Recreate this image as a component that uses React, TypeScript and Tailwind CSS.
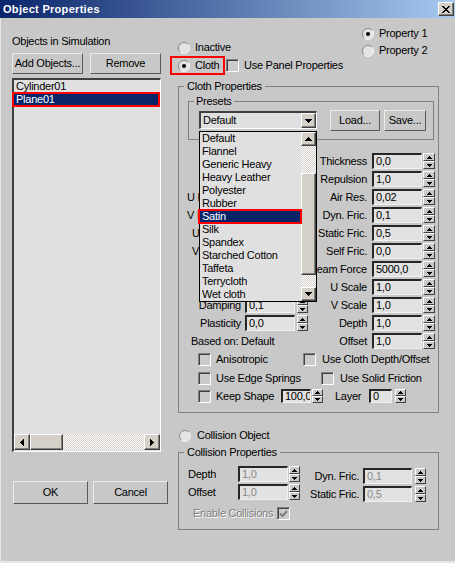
import React from 'react';

// pixel triangle, n rows
function Tri({ dir, n, color = '#000' }: { dir: 'up' | 'down' | 'left' | 'right'; n: number; color?: string }) {
  const w = 2 * n - 1;
  const rects: React.ReactNode[] = [];
  for (let i = 0; i < n; i++) {
    const len = 2 * i + 1;
    const off = n - 1 - i;
    if (dir === 'up') rects.push(<rect key={i} x={off} y={i} width={len} height={1} />);
    if (dir === 'down') rects.push(<rect key={i} x={off} y={n - 1 - i} width={len} height={1} />);
    if (dir === 'left') rects.push(<rect key={i} x={i} y={off} width={1} height={len} />);
    if (dir === 'right') rects.push(<rect key={i} x={n - 1 - i} y={off} width={1} height={len} />);
  }
  const vertical = dir === 'up' || dir === 'down';
  return (
    <svg width={vertical ? w : n} height={vertical ? n : w} fill={color} shapeRendering="crispEdges">
      {rects}
    </svg>
  );
}

function Btn({ children, className }: { children: React.ReactNode; className: string }) {
  return (
    <div
      className={`flex shrink-0 items-center justify-center whitespace-nowrap border border-t-[#ececec] border-l-[#ececec] border-r-[#5a5a5a] border-b-[#5a5a5a] bg-[#c8c8c8] ${className}`}
    >
      {children}
    </div>
  );
}

function ScrollBtn({ dir, className }: { dir: 'up' | 'down' | 'left' | 'right'; className: string }) {
  return (
    <div
      className={`flex shrink-0 items-center justify-center border border-t-white border-l-white border-r-[#404040] border-b-[#404040] bg-[#d4d0c8] shadow-[inset_-1px_-1px_0_#808080] ${className}`}
    >
      <Tri dir={dir} n={4} />
    </div>
  );
}

function Spin({ className }: { className: string }) {
  return (
    <div className={`flex shrink-0 flex-col bg-[#c8c8c8] ${className}`}>
      <div className="flex flex-1 items-center justify-center border border-t-white border-l-white border-r-[#404040] border-b-[#404040]">
        <Tri dir="up" n={3} />
      </div>
      <div className="flex flex-1 items-center justify-center border border-t-white border-l-white border-r-[#404040] border-b-[#404040]">
        <Tri dir="down" n={3} />
      </div>
    </div>
  );
}

function Field({ value, className, disabled = false }: { value: string; className: string; disabled?: boolean }) {
  return (
    <div
      className={`flex shrink-0 items-center overflow-hidden whitespace-nowrap border-t-2 border-l-2 border-r border-b border-t-[#262626] border-l-[#262626] border-r-[#f0f0f0] border-b-[#f0f0f0] bg-[#e2e2e2] pl-[2px] ${
        disabled ? 'text-[#8a8a8a]' : 'text-black'
      } ${className}`}
    >
      {value}
    </div>
  );
}

function Radio({ checked = false }: { checked?: boolean }) {
  return (
    <svg width="12" height="12" viewBox="0 0 12 12" className="shrink-0">
      <circle cx="6" cy="6" r="5.5" fill="#e4e4e4" />
      <path d="M2.1 9.9A5.5 5.5 0 0 1 9.9 2.1" fill="none" stroke="#8a8a8a" />
      <path d="M9.9 2.1A5.5 5.5 0 0 1 2.1 9.9" fill="none" stroke="#f4f4f4" />
      {checked && <circle cx="6" cy="6" r="2" fill="#000" />}
    </svg>
  );
}

function Check({ checked = false, disabled = false, className = '' }: { checked?: boolean; disabled?: boolean; className?: string }) {
  return (
    <div
      className={`flex h-[13px] w-[13px] shrink-0 items-center justify-center border border-t-[#808080] border-l-[#808080] border-r-white border-b-white bg-[#cbcbcb] shadow-[inset_1px_1px_0_#404040] ${className}`}
    >
      {checked && (
        <svg width="9" height="8" viewBox="0 0 9 8">
          <polyline points="1,3.5 3.5,6 8,1" fill="none" stroke={disabled ? '#808080' : '#000'} strokeWidth="2" />
        </svg>
      )}
    </div>
  );
}

const presets = [
  'Default',
  'Flannel',
  'Generic Heavy',
  'Heavy Leather',
  'Polyester',
  'Rubber',
  'Satin',
  'Silk',
  'Spandex',
  'Starched Cotton',
  'Taffeta',
  'Terrycloth',
  'Wet cloth',
];

// left labels of rows 3-6 sit under the open preset list, only their first letters show
const rows: { left: null | { label: string; value?: string; cls: string }; right: [string, string] }[] = [
  { left: null, right: ['Thickness', '0,0'] },
  { left: null, right: ['Repulsion', '1,0'] },
  { left: { label: 'U Bend', cls: 'pl-[8px]' }, right: ['Air Res.', '0,02'] },
  { left: { label: 'V Bend', cls: 'pl-[8px]' }, right: ['Dyn. Fric.', '0,1'] },
  { left: { label: 'U Stretch', cls: 'pl-[13px]' }, right: ['Static Fric.', '0,5'] },
  { left: { label: 'V Stretch', cls: 'pl-[13px]' }, right: ['Self Fric.', '0,0'] },
  { left: null, right: ['Seam Force', '5000,0'] },
  { left: null, right: ['U Scale', '1,0'] },
  { left: { label: 'Damping', value: '0,1', cls: 'justify-end' }, right: ['V Scale', '1,0'] },
  { left: { label: 'Plasticity', value: '0,0', cls: 'justify-end' }, right: ['Depth', '1,0'] },
];

const checker = 'bg-[image:repeating-conic-gradient(#ffffff_0_25%,#d4d0c8_0_50%)] bg-[length:2px_2px]';

export default function App() {
  return (
    <div className="relative h-[563px] w-[455px] overflow-hidden bg-[#c8c8c8] font-['Liberation_Sans',Arial,sans-serif] text-[11px] leading-[13px] tracking-[-0.25px] text-black shadow-[inset_1px_0_0_#e6e6e6,inset_0_-2px_0_#e6e6e6]">
      {/* title bar */}
      <div className="flex h-[18px] items-center bg-[linear-gradient(to_right,#0a246a,#a6caf0)] pl-[3px] pr-[1px]">
        <span className="text-[11px] font-bold tracking-[0.3px] text-white">Object Properties</span>
        <div className="ml-auto flex h-[14px] w-[16px] items-center justify-center border border-t-white border-l-white border-r-[#404040] border-b-[#404040] bg-[#d4d0c8] shadow-[inset_-1px_-1px_0_#808080]">
          <svg width="8" height="7" fill="#000" shapeRendering="crispEdges">
            {[0, 1, 2, 3, 4, 5, 6].map((i) => (
              <React.Fragment key={i}>
                <rect x={i} y={i} width={2} height={1} />
                <rect x={6 - i} y={i} width={2} height={1} />
              </React.Fragment>
            ))}
          </svg>
        </div>
      </div>

      <div className="flex h-[545px]">
        {/* objects list */}
        <div className="flex w-[170px] shrink-0 flex-col pl-[12px]">
          <div className="mt-[17px] h-[13px] whitespace-nowrap">Objects in Simulation</div>
          <div className="mt-[5px] flex gap-[7px]">
            <Btn className="h-[21px] w-[71px]">Add Objects...</Btn>
            <Btn className="h-[21px] w-[71px]">Remove</Btn>
          </div>
          <div className="mt-[4px] flex h-[374px] w-[149px] flex-col border-t-2 border-l-2 border-r border-b border-t-[#404040] border-l-[#404040] border-r-white border-b-white bg-[#e0e0e0] pb-[1px]">
            <div className="h-[13px] whitespace-nowrap pl-[2px]">Cylinder01</div>
            <div className="relative h-[13px] whitespace-nowrap bg-[#0a246a] pl-[2px] text-white">
              Plane01
              <div className="absolute -top-[1px] -bottom-[1px] -left-[2px] right-0 border-2 border-[#ff0000]" />
            </div>
            <div className="mt-auto flex h-[16px]">
              <ScrollBtn dir="left" className="h-[16px] w-[16px]" />
              <div className="h-[16px] w-[33px] shrink-0 border border-t-white border-l-white border-r-[#404040] border-b-[#404040] bg-[#d4d0c8] shadow-[inset_-1px_-1px_0_#808080]" />
              <div className={`h-[16px] flex-1 ${checker}`} />
              <ScrollBtn dir="right" className="h-[16px] w-[16px]" />
            </div>
          </div>
          <div className="mt-[29px] ml-[1px] flex gap-[5px]">
            <Btn className="h-[23px] w-[75px]">OK</Btn>
            <Btn className="h-[23px] w-[75px]">Cancel</Btn>
          </div>
        </div>

        {/* properties */}
        <div className="flex w-[285px] shrink-0 flex-col">
          <div className="flex h-[62px]">
            <div className="flex w-[192px] shrink-0 flex-col">
              <div className="mt-[23px] flex h-[13px] items-center pl-[8px]">
                <Radio />
                <span className="ml-[5px]">Inactive</span>
              </div>
              <div className="mt-[2px] flex items-center">
                <div className="flex h-[19px] w-[55px] shrink-0 items-center border-2 border-[#ff0000] pl-[6px]">
                  <Radio checked />
                  <span className="ml-[5px]">Cloth</span>
                </div>
                <Check className="ml-[1px]" />
                <span className="ml-[5px] whitespace-nowrap">Use Panel Properties</span>
              </div>
            </div>
            <div className="mt-[7px] flex flex-col">
              <div className="flex h-[17px] items-center">
                <Radio checked />
                <span className="ml-[5px] whitespace-nowrap">Property 1</span>
              </div>
              <div className="flex h-[17px] items-center">
                <Radio />
                <span className="ml-[5px] whitespace-nowrap">Property 2</span>
              </div>
            </div>
          </div>

          <fieldset className="ml-[8px] w-[261px] min-w-0 border border-[#808080]">
            <legend className="ml-[5px] px-[3px] leading-[12px]">Cloth Properties</legend>

            <fieldset className="mt-[3px] ml-[9px] w-[246px] min-w-0 border border-[#808080]">
              <legend className="ml-[5px] px-[2px] leading-[12px]">Presets</legend>
              <div className="mt-[3px] mb-[8px] flex items-start">
                <div className="relative mt-[1px] ml-[10px] h-[18px] w-[118px] shrink-0">
                  <div className="flex h-full items-center border-t-2 border-l-2 border-r border-b border-t-[#404040] border-l-[#404040] border-r-white border-b-white bg-[#e0e0e0]">
                    <span className="flex-1 pl-[2px]">Default</span>
                    <ScrollBtn dir="down" className="h-[15px] w-[15px]" />
                  </div>
                  <div className="absolute top-[20px] left-0 z-20 flex h-[171px] w-[118px] border border-black bg-[#e0e0e0]">
                    <div className="flex w-[101px] shrink-0 flex-col">
                      {presets.map((p) =>
                        p === 'Satin' ? (
                          <div key={p} className="relative h-[13px] shrink-0 whitespace-nowrap bg-[#0a246a] pl-[2px] text-white">
                            {p}
                            <div className="absolute -top-[1px] -right-[1px] -bottom-[1px] -left-[2px] z-10 border-2 border-[#ff0000]" />
                          </div>
                        ) : (
                          <div key={p} className="h-[13px] shrink-0 whitespace-nowrap pl-[2px]">
                            {p}
                          </div>
                        )
                      )}
                    </div>
                    <div className="flex w-[15px] shrink-0 flex-col">
                      <ScrollBtn dir="up" className="h-[14px] w-[15px]" />
                      <div className={`h-[27px] shrink-0 ${checker}`} />
                      <div className="h-[102px] shrink-0 border border-t-white border-l-white border-r-[#404040] border-b-[#404040] bg-[#d4d0c8] shadow-[inset_-1px_-1px_0_#808080]" />
                      <div className={`h-[12px] shrink-0 ${checker}`} />
                      <ScrollBtn dir="down" className="h-[14px] w-[15px]" />
                    </div>
                  </div>
                </div>
                <Btn className="ml-[13px] h-[21px] w-[50px]">Load...</Btn>
                <Btn className="ml-[4px] h-[21px] w-[42px]">Save...</Btn>
              </div>
            </fieldset>

            <div className="mt-[13px] flex flex-col gap-[2px]">
              {rows.map((r) => (
                <div key={r.right[0]} className="flex h-[16px] items-center">
                  <div className="flex w-[129px] shrink-0 items-center">
                    {r.left &&
                      (r.left.value ? (
                        <>
                          <div className={`flex w-[62px] shrink-0 whitespace-nowrap ${r.left.cls}`}>{r.left.label}</div>
                          <Field value={r.left.value} className="ml-[4px] h-[16px] w-[50px]" />
                          <Spin className="ml-[2px] h-[16px] w-[11px]" />
                        </>
                      ) : (
                        <div className={`w-[20px] shrink-0 overflow-hidden whitespace-nowrap ${r.left.cls}`}>{r.left.label}</div>
                      ))}
                  </div>
                  <div className="flex w-[59px] shrink-0 justify-end whitespace-nowrap">{r.right[0]}</div>
                  <Field value={r.right[1]} className="ml-[5px] h-[16px] w-[50px]" />
                  <Spin className="ml-[1px] h-[16px] w-[12px]" />
                </div>
              ))}
              <div className="flex h-[16px] items-center">
                <div className="w-[129px] shrink-0 whitespace-nowrap pl-[12px]">Based on: Default</div>
                <div className="flex w-[59px] shrink-0 justify-end whitespace-nowrap">Offset</div>
                <Field value="1,0" className="ml-[5px] h-[16px] w-[50px]" />
                <Spin className="ml-[1px] h-[16px] w-[12px]" />
              </div>
            </div>

            <div className="mt-[4px] flex h-[13px] items-center pl-[19px]">
              <div className="flex w-[105px] shrink-0 items-center">
                <Check />
                <span className="ml-[5px] whitespace-nowrap">Anisotropic</span>
              </div>
              <Check />
              <span className="relative -my-[2px] ml-[6px] shrink-0 whitespace-nowrap bg-[#c8c8c8] py-[2px] pr-[9px]">
                Use Cloth Depth/Offset
              </span>
            </div>
            <div className="mt-[6px] flex h-[13px] items-center pl-[19px]">
              <div className="flex w-[123px] shrink-0 items-center">
                <Check />
                <span className="ml-[5px] whitespace-nowrap">Use Edge Springs</span>
              </div>
              <Check />
              <span className="ml-[6px] whitespace-nowrap">Use Solid Friction</span>
            </div>
            <div className="mt-[4px] mb-[9px] flex h-[14px] items-center pl-[19px]">
              <div className="flex w-[83px] shrink-0 items-center">
                <Check />
                <span className="ml-[5px] whitespace-nowrap">Keep Shape</span>
              </div>
              <Field value="100,0" className="h-[14px] w-[30px]" />
              <Spin className="ml-[1px] h-[14px] w-[11px]" />
              <span className="ml-[12px] w-[34px] shrink-0">Layer</span>
              <Field value="0" className="h-[14px] w-[23px]" />
              <Spin className="ml-[3px] h-[14px] w-[11px]" />
            </div>
          </fieldset>

          <div className="mt-[16px] flex h-[13px] items-center pl-[9px]">
            <Radio />
            <span className="ml-[6px] whitespace-nowrap">Collision Object</span>
          </div>

          <fieldset className="mt-[4px] ml-[8px] w-[261px] min-w-0 border border-[#808080]">
            <legend className="ml-[5px] px-[3px] leading-[12px]">Collision Properties</legend>
            <div className="flex items-start">
              <div className="mt-[8px] flex flex-col gap-[2px]">
                {[
                  ['Depth', '1,0'],
                  ['Offset', '1,0'],
                ].map(([l, v]) => (
                  <div key={l} className="flex h-[16px] items-center">
                    <span className="w-[59px] shrink-0 pl-[9px]">{l}</span>
                    <Field value={v} disabled className="h-[16px] w-[50px]" />
                    <Spin className="ml-[1px] h-[16px] w-[11px]" />
                  </div>
                ))}
              </div>
              <div className="mt-[10px] flex flex-col gap-[2px]">
                {[
                  ['Dyn. Fric.', '0,1'],
                  ['Static Fric.', '0,5'],
                ].map(([l, v]) => (
                  <div key={l} className="flex h-[16px] items-center">
                    <span className="flex w-[59px] shrink-0 justify-end whitespace-nowrap">{l}</span>
                    <Field value={v} disabled className="ml-[4px] h-[16px] w-[49px]" />
                    <Spin className="ml-[3px] h-[16px] w-[11px]" />
                  </div>
                ))}
              </div>
            </div>
            <div className="mt-[5px] mb-[9px] flex h-[13px] items-center pl-[14px]">
              <span className="w-[84px] shrink-0 whitespace-nowrap text-[#808080] [text-shadow:1px_1px_0_#ffffff]">Enable Collisions</span>
              <Check checked disabled />
            </div>
          </fieldset>
        </div>
      </div>
    </div>
  );
}
